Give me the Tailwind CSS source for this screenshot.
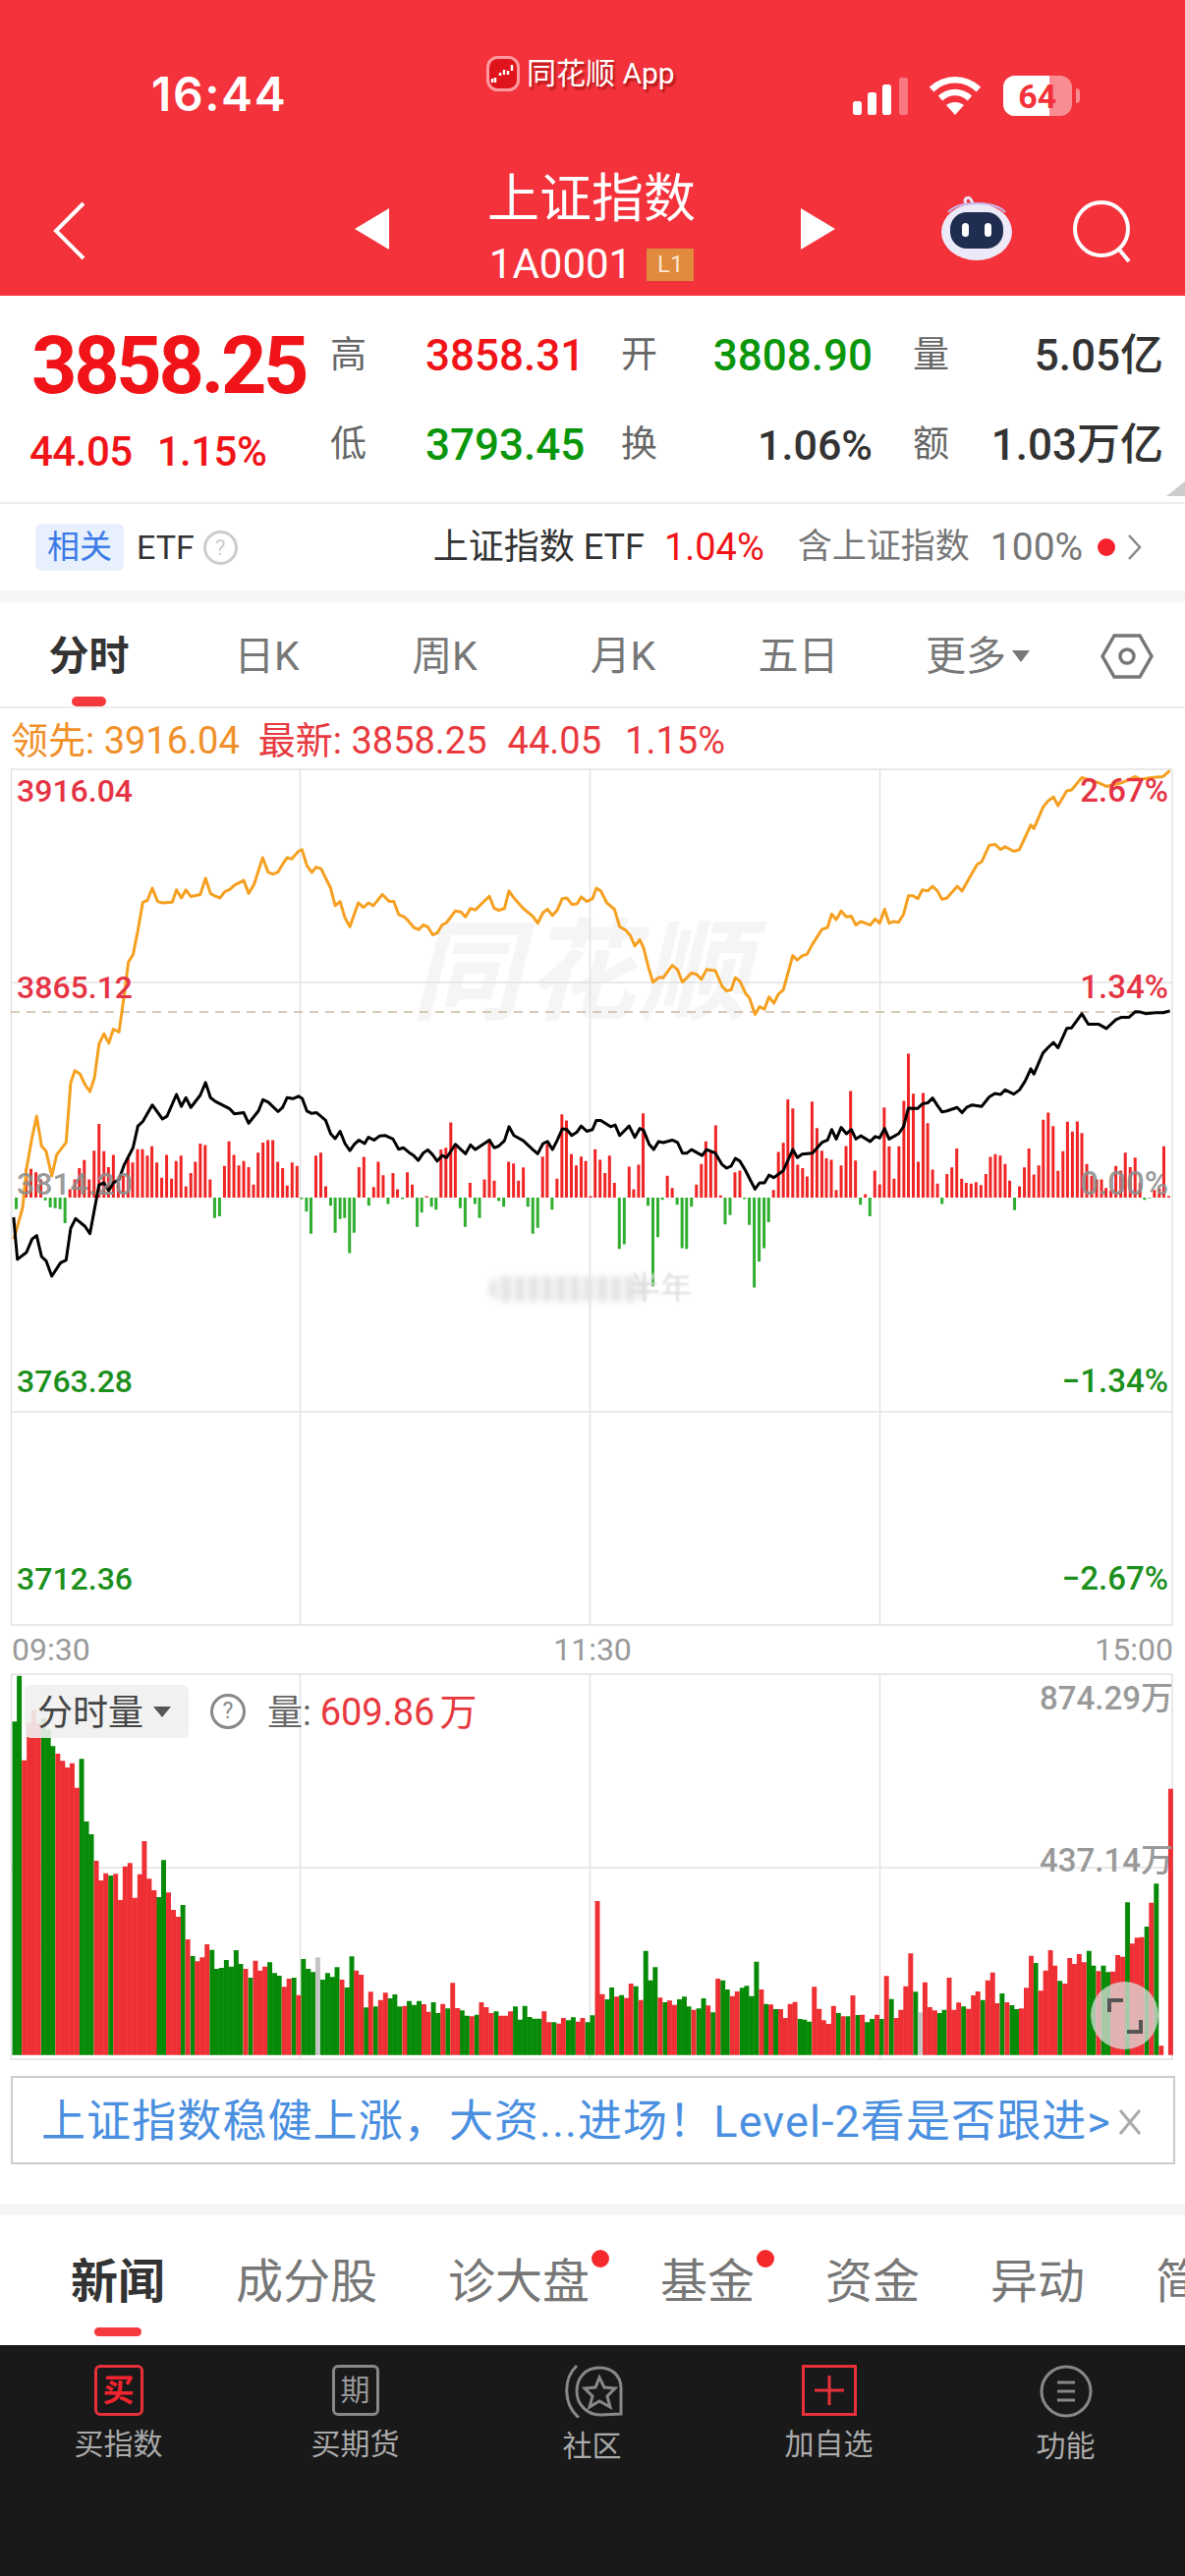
<!DOCTYPE html>
<html lang="zh">
<head>
<meta charset="utf-8">
<script src="https://cdn.jsdelivr.net/npm/@tailwindcss/browser@4"></script>
</head>
<body class="bg-white">
<div class="relative w-[1206px] h-[2622px] overflow-hidden flex flex-col bg-white text-[#333] [font-family:Roboto,'Noto_Sans_CJK_SC',sans-serif]">

<!-- header -->
<header class="h-[301px] shrink-0 bg-[#f3323b] text-white flex flex-col">
  <div class="h-[150px] flex items-start">
    <div class="ml-[154px] mt-[68px] w-[136px] text-[48px] leading-[56px] font-semibold [font-family:Inter,sans-serif] tracking-[1.6px] whitespace-nowrap">16:44</div>
    <div class="ml-[205px] mt-[55px] flex items-center gap-[7px]">
      <svg width="34" height="36" viewBox="0 0 34 36"><rect x="1.5" y="1.5" width="31" height="33" rx="10" fill="#e0141c" stroke="#ff9aa0" stroke-width="3"/><path d="M6 23v4M9 22v5M14 17v3M18 19v-5M22 15v4M26 9v6" stroke="#fff" stroke-width="2.4"/></svg>
      <span class="text-[30px] leading-[40px] [text-shadow:2px_3px_2px_rgba(120,0,0,.55)]">同花顺 App</span>
    </div>
    <svg class="ml-[181px] mt-[78px]" width="60" height="40" viewBox="0 0 60 40"><rect x="0" y="25" width="9" height="14" rx="2.5" fill="#fff"/><rect x="15" y="16" width="9" height="23" rx="2.5" fill="#fff"/><rect x="30" y="8" width="9" height="31" rx="2.5" fill="#fff"/><rect x="47" y="1" width="9" height="38" rx="2.5" fill="#fff" fill-opacity=".35"/></svg>
    <svg class="ml-[17px] mt-[78px]" width="54" height="40" viewBox="0 0 54 40" fill="none"><path d="M3 13C17 0 37 0 51 13" stroke="#fff" stroke-width="6.5"/><path d="M12 22c9-8 21-8 30 0" stroke="#fff" stroke-width="6.5"/><path d="M18 29c5-4 13-4 18 0l-9 10z" fill="#fff"/></svg>
    <div class="relative ml-[22px] mt-[77px] w-[70px] h-[41px] rounded-[12px] bg-white/45 overflow-hidden">
      <div class="w-[47px] h-full bg-white"></div>
      <div class="absolute inset-0 flex items-center justify-center text-[34px] font-bold leading-none text-[#f3323b]">64</div>
    </div>
    <div class="ml-[4px] mt-[90px] w-[4px] h-[15px] rounded-r-full bg-white/45"></div>
  </div>
  <div class="h-[151px] flex items-start">
    <svg class="ml-[53px] mt-[54px]" width="36" height="62" viewBox="0 0 36 62" fill="none"><path d="M32 3 4 31l28 28" stroke="#fff" stroke-width="4"/></svg>
    <svg class="ml-[271px] mt-[62px]" width="36" height="42" viewBox="0 0 36 42"><path d="M36 0v42L1 21z" fill="#fff"/></svg>
    <div class="ml-[56px] w-[300px] flex flex-col items-center">
      <div class="mt-[23px] text-[53px] leading-[60px]">上证指数</div>
      <div class="mt-[14px] flex items-center gap-[15px]">
        <span class="text-[42px] leading-[44px]">1A0001</span>
        <span class="w-[48px] h-[33px] bg-[#e08a3e] text-[#fde7cf] text-[24px] leading-[33px] text-center">L1</span>
      </div>
    </div>
    <svg class="ml-[63px] mt-[62px]" width="36" height="42" viewBox="0 0 36 42"><path d="M0 0v42l35-21z" fill="#fff"/></svg>
    <svg class="ml-[105px] mt-[48px]" width="76" height="68" viewBox="0 0 76 68"><path d="M27 9c-3-5 3-8 5-4l3 6" fill="none" stroke="#e6e4f6" stroke-width="3"/><ellipse cx="38" cy="38" rx="36" ry="29" fill="#eceaf8"/><path d="M9 18C20 6 56 6 67 18" fill="none" stroke="#c8b8f0" stroke-width="2"/><rect x="11" y="18" width="54" height="37" rx="17" fill="#1f2d50"/><rect x="23" y="29" width="7" height="14" rx="3.5" fill="#fff"/><rect x="46" y="29" width="7" height="14" rx="3.5" fill="#fff"/></svg>
    <svg class="ml-[58px] mt-[52px]" width="66" height="66" viewBox="0 0 66 66" fill="none"><circle cx="31" cy="31" r="27" stroke="#fff" stroke-width="4"/><path d="m49 52 10 12" stroke="#fff" stroke-width="4"/></svg>
  </div>
</header>

<!-- quote -->
<section class="relative h-[210px] shrink-0 flex">
  <div class="w-[336px] shrink-0 pl-[32px]">
    <div class="mt-[28px] text-[81px] leading-[88px] font-bold text-[#f01418] tracking-[-3.3px]">3858.25</div>
    <div class="mt-[21px] flex gap-[25px] text-[42px] leading-[44px] font-medium text-[#f01418] tracking-[-.5px]"><span class="-ml-[2px]">44.05</span><span>1.15%</span></div>
  </div>
  <div class="grid grid-cols-[97px_199px_297px_255px] grid-rows-[91px_91px] items-center pt-[15px] w-[848px] text-[44px] font-medium leading-[50px]">
    <div class="text-[37px] font-normal text-[#666]">高</div>
    <div class="text-[#f01418]">3858.31</div>
    <div class="text-[37px] font-normal text-[#666] flex justify-between"><span>开</span><span class="text-[44px] font-medium text-[#0a960a] pr-[41px]">3808.90</span></div>
    <div class="text-[37px] font-normal text-[#666] flex justify-between"><span>量</span><span class="text-[44px] font-medium text-[#333]">5.05亿</span></div>
    <div class="text-[37px] font-normal text-[#666]">低</div>
    <div class="text-[#0a960a]">3793.45</div>
    <div class="text-[37px] font-normal text-[#666] flex justify-between"><span>换</span><span class="text-[43px] font-medium text-[#333] pr-[41px]">1.06%</span></div>
    <div class="text-[37px] font-normal text-[#666] flex justify-between"><span>额</span><span class="text-[44px] font-medium text-[#333]">1.03万亿</span></div>
  </div>
  <div class="absolute right-0 bottom-[6px] w-0 h-0 border-l-[19px] border-l-transparent border-b-[15px] border-b-[#ccc]"></div>
</section>

<!-- etf row -->
<section class="h-[90px] shrink-0 border-t-2 border-[#eee] flex items-center text-[35px] leading-[48px] whitespace-nowrap">
  <div class="ml-[36px] w-[90px] h-[48px] rounded-[6px] bg-[#e8f0fd] text-[#3b7ae6] text-[33px] text-center">相关</div>
  <span class="ml-[13px] text-[34px]">ETF</span>
  <span class="ml-[9px] w-[35px] h-[35px] rounded-full border-[3px] border-[#ccc] text-[#ccc] text-[22px] leading-[29px] text-center">?</span>
  <span class="ml-[199px] text-[#333] text-[36px]">上证指数 ETF</span>
  <span class="ml-[20px] text-[#f01418] text-[38px]">1.04%</span>
  <span class="ml-[34px] text-[#777]">含上证指数</span>
  <span class="ml-[21px] text-[#777] text-[39px]">100%</span>
  <span class="ml-[15px] w-[18px] h-[18px] rounded-full bg-[#f5222d]"></span>
  <svg class="ml-[12px]" width="16" height="28" viewBox="0 0 16 28" fill="none"><path d="m2 2 11 12L2 26" stroke="#888" stroke-width="2.5"/></svg>
</section>
<div class="h-[12px] shrink-0 bg-[#f5f5f5]"></div>

<!-- period tabs -->
<nav class="relative h-[109px] shrink-0 border-b-2 border-[#eee] flex items-center pt-[4px] text-[41px] leading-[48px] text-[#777] -mt-[1px]">
  <div class="w-[181px] text-center text-[#333] font-bold">分时</div>
  <div class="w-[181px] text-center">日K</div>
  <div class="w-[181px] text-center">周K</div>
  <div class="w-[182px] text-center">月K</div>
  <div class="w-[175px] text-center">五日</div>
  <div class="w-[190px] flex items-center justify-center gap-[6px]"><span>更多</span><span class="w-0 h-0 border-x-[9px] border-x-transparent border-t-[12px] border-t-[#777]"></span></div>
  <svg class="ml-[30px]" width="54" height="48" viewBox="0 0 54 48" fill="none"><path d="M14 3h26l12 21-12 21H14L2 24z" stroke="#777" stroke-width="3.5"/><circle cx="27" cy="24" r="7" stroke="#777" stroke-width="3.5"/></svg>
  <div class="absolute left-[73px] bottom-0 w-[35px] h-[10px] rounded-[5px] bg-[#f5393c]"></div>
</nav>

<div class="h-[62px] shrink-0 pl-[11px] pt-[3px] flex items-center text-[38px] leading-[44px] whitespace-nowrap">
  <span class="text-[#f0902a]">领先: 3916.04</span>
  <span class="ml-[19px] text-[#e8393e]">最新: 3858.25</span>
  <span class="ml-[21px] text-[#e8393e]">44.05</span>
  <span class="ml-[24px] text-[#e8393e]">1.15%</span>
</div>

<!-- main chart -->
<section class="relative h-[871px] shrink-0">
  <div class="absolute left-[418px] top-[148px] text-[112px] leading-[120px] font-bold italic text-[#f5f5f5] tracking-[4px]">同花顺</div>
  <svg class="absolute left-0 -top-[4px]" width="1206" height="880" viewBox="0 780 1206 880" fill="none">
    <g stroke="#e2e2e2" stroke-width="1.5">
      <path d="M11.5 784V1655M305.5 784V1655M600.5 784V1655M895.5 784V1655M1193 784V1655M11 784H1193M11 1001H1193M11 1438H1193M11 1655H1193"/>
    </g>
    <path d="M11 1031H1193" stroke="#c9b8a0" stroke-width="1.5" stroke-dasharray="9 7"/>
    <g transform="translate(0,780) scale(.384566 .357143)" fill="none">
      <path vector-effect="non-scaling-stroke" stroke="#2fae2f" stroke-width="3" d="M43 1232V1265M120 1232V1240M133 1232V1260M146 1232V1262M159 1232V1265M172 1232V1305M568 1232V1290M581 1232V1285M798 1232V1236M811 1232V1272M823 1232V1335M875 1232V1255M887 1232V1332M900 1232V1293M912 1232V1290M925 1232V1390M937 1232V1332M976 1232V1255M1027 1232V1250M1065 1232V1236M1104 1232V1315M1116 1232V1275M1142 1232V1258M1154 1232V1266M1218 1232V1262M1231 1232V1315M1257 1232V1250M1269 1232V1290M1320 1232V1242M1333 1232V1258M1397 1232V1258M1410 1232V1335M1423 1232V1318M1461 1232V1266"/>
      <path vector-effect="non-scaling-stroke" stroke="#f02525" stroke-width="3" d="M69 1232V1150M82 1232V1150M95 1232V1160M108 1232V1180M185 1232V1208M198 1232V1180M210 1232V1148M223 1232V1125M236 1232V1180M249 1232V1098M262 1232V1022M275 1232V1100M287 1232V1145M300 1232V1110M313 1232V1190M326 1232V1170M339 1232V1120M351 1232V1132M364 1232V1094M377 1232V1094M390 1232V1112M402 1232V1086M415 1232V1132M428 1232V1175M441 1232V1110M454 1232V1178M466 1232V1128M479 1232V1112M492 1232V1200M505 1232V1162M517 1232V1130M530 1232V1078M543 1232V1082M556 1232V1180M594 1232V1142M606 1232V1072M619 1232V1110M632 1232V1140M645 1232V1128M658 1232V1145M671 1232V1195M683 1232V1104M696 1232V1075M709 1232V1068M722 1232V1068M735 1232V1130M748 1232V1148M760 1232V1198M773 1232V1132M786 1232V1142M836 1232V1112M849 1232V1104M862 1232V1200M950 1232V1145M963 1232V1116M989 1232V1202M1001 1232V1130M1014 1232V1168M1040 1232V1162M1052 1232V1208M1078 1232V1160M1091 1232V1195M1129 1232V1228M1167 1232V1095M1180 1232V1090M1193 1232V1018M1205 1232V1085M1244 1232V1190M1282 1232V1180M1295 1232V1072M1308 1232V1184M1346 1232V1130M1359 1232V1135M1372 1232V1184M1385 1232V1146M1436 1232V1115M1448 1232V1080M1474 1232V1178M1487 1232V995M1499 1232V1012M1512 1232V1108M1525 1232V1140M1538 1232V1115M1550 1232V1128M1563 1232V1228"/>
      <g transform="translate(1568,0)">
        <path vector-effect="non-scaling-stroke" stroke="#2fae2f" stroke-width="3" d="M71 1232V1378M84 1232V1365M147 1232V1255M160 1232V1485M173 1232V1345M185 1232V1238M224 1232V1252M237 1232V1376M249 1232V1378M262 1232V1258M351 1232V1308M364 1232V1282M402 1232V1236M415 1232V1310M428 1232V1488M441 1232V1415M454 1232V1376M466 1232V1302M709 1232V1252M734 1232V1285M925 1232V1250M1117 1232V1268M1461 1232V1238M1474 1232V1234"/>
        <path vector-effect="non-scaling-stroke" stroke="#f02525" stroke-width="3" d="M7 1232V1094M20 1232V1124M33 1232V1162M45 1232V1112M58 1232V1190M97 1232V1144M109 1232V1208M122 1232V1138M134 1232V992M198 1232V1170M211 1232V1205M275 1232V1195M288 1232V1136M300 1232V1072M313 1232V1100M326 1232V1026M339 1232V1226M377 1232V1160M390 1232V1155M479 1232V1210M492 1232V1102M505 1232V1076M517 1232V952M530 1232V978M543 1232V1138M556 1232V1148M568 1232V1172M581 1232V958M594 1232V1034M607 1232V1098M619 1232V1120M632 1232V1124M645 1232V1210M658 1232V1140M671 1232V1085M683 1232V928M696 1232V1126M722 1232V1222M747 1232V1155M760 1232V1194M772 1232V975M785 1232V1086M798 1232V1178M811 1232V1086M824 1232V956M836 1232V822M849 1232V936M862 1232V1130M875 1232V934M887 1232V1020M900 1232V1152M913 1232V1192M938 1232V1165M951 1232V1146M964 1232V1092M977 1232V1178M989 1232V1190M1002 1232V1192M1015 1232V1188M1028 1232V1196M1041 1232V1165M1053 1232V1116M1066 1232V1108M1079 1232V1112M1092 1232V1136M1104 1232V1184M1130 1232V1200M1143 1232V1146M1155 1232V1092M1168 1232V1166M1181 1232V1140M1193 1232V1010M1206 1232V990M1219 1232V1028M1232 1232V1156M1245 1232V1100M1257 1232V1016M1270 1232V1044M1283 1232V1015M1295 1232V1048M1308 1232V1136M1321 1232V1170M1334 1232V1180M1347 1232V1180M1359 1232V1205M1372 1232V1212M1385 1232V1142M1398 1232V1155M1410 1232V1104M1423 1232V1145M1436 1232V1118M1449 1232V1190M1487 1232V1210M1500 1232V1206M1512 1232V1086M1525 1232V1228"/>
      </g>
      <path vector-effect="non-scaling-stroke" stroke="#f5a020" stroke-width="3" stroke-linejoin="round" d="M36 1350 42 1330 60 1260 70 1150 85 1060 97 1000 110 1085 122 1100 137 1170 150 1110 175 1075 187 905 198 870 212 880 225 910 238 930 250 890 262 795 275 765 288 792 300 752 315 760 328 660 340 560 352 540 365 470 378 390 390 385 403 350 417 388 430 392 456 390 467 355 480 378 492 355 505 374 530 368 544 322 557 365 570 373 582 378 595 360 608 354 620 342 645 328 658 365 672 340 695 263 710 305 722 310 735 305 748 282 760 263 772 267 790 245 799 240 812 285 825 305 837 290 850 295 875 350 887 400 900 388 913 435 926 460 948 392 962 405 975 392 988 400 1012 368 1030 388 1042 388 1055 425 1070 432 1082 445 1095 462 1108 468 1120 455 1132 460 1145 483 1157 478 1170 455 1182 448 1205 415 1220 418 1232 432 1245 408 1258 412 1295 373 1308 408 1320 413 1335 408 1347 358 1360 378 1385 408 1410 430 1423 450 1437 420 1449 410 1462 428 1475 412 1488 380 1500 378 1513 396 1527 395 1538 375 1553 388 1568 380 1578 350 1590 358 1606 392 1626 410 1640 460 1656 470 1668 485 1680 515 1693 497 1703 520 1716 575 1728 618 1743 605 1755 605 1779 570 1793 582 1806 618 1830 592 1843 595 1856 610 1870 582 1893 585 1911 630 1923 643 1935 640 1946 605 1958 615 1973 650 1983 662 1998 710 2010 688 2023 695 2035 660 2048 678 2060 652 2073 640 2098 542 2110 555 2123 543 2136 538 2150 510 2175 468 2190 462 2201 424 2213 440 2226 415 2240 432 2253 430 2265 455 2278 445 2303 455 2316 438 2328 450 2341 410 2353 450 2365 445 2378 447 2391 425 2404 372 2416 372 2429 380 2441 355 2455 358 2468 345 2481 358 2493 382 2506 378 2533 345 2546 358 2586 282 2598 275 2618 228 2633 225 2648 240 2660 232 2683 245 2698 240 2728 170 2736 180 2760 120 2773 102 2788 90 2800 115 2823 73 2836 70 2863 35 2908 50 2928 60 2968 50 3005 32 3018 40 3048 35 3078 32 3096 15"/>
      <path vector-effect="non-scaling-stroke" stroke="#000" stroke-width="3" stroke-linejoin="round" d="M36 1288 46 1408 70 1388 85 1350 97 1340 110 1400 122 1412 137 1456 160 1418 175 1410 187 1320 200 1292 225 1314 238 1335 262 1196 275 1190 288 1212 300 1190 315 1180 328 1140 352 1090 365 1028 378 1015 403 968 430 1008 442 1000 467 938 480 972 492 947 505 975 530 940 544 904 557 947 570 958 607 978 620 993 645 990 658 1020 684 985 696 953 710 960 736 987 748 975 760 947 775 950 790 943 800 950 812 985 825 992 838 990 862 1012 875 1050 887 1064 900 1043 913 1078 926 1098 938 1080 950 1068 965 1078 975 1060 990 1068 1005 1056 1020 1055 1040 1065 1055 1094 1068 1090 1082 1103 1095 1112 1107 1126 1120 1105 1132 1096 1145 1110 1157 1128 1170 1112 1182 1118 1205 1080 1220 1095 1232 1107 1245 1082 1258 1095 1295 1068 1308 1090 1320 1085 1335 1070 1347 1030 1360 1055 1385 1070 1410 1095 1423 1107 1437 1078 1449 1072 1462 1095 1475 1068 1488 1036 1500 1038 1513 1055 1527 1045 1538 1028 1553 1043 1568 1038 1578 1012 1590 1012 1616 1030 1628 1025 1640 1055 1665 1028 1680 1060 1693 1035 1703 1040 1718 1080 1730 1095 1743 1072 1755 1075 1779 1068 1793 1075 1806 1105 1818 1105 1830 1095 1858 1112 1870 1095 1893 1105 1911 1138 1923 1148 1935 1142 1946 1120 1958 1128 1973 1155 1998 1208 2010 1190 2023 1190 2035 1168 2048 1175 2073 1155 2098 1095 2110 1118 2123 1108 2150 1105 2175 1075 2190 1068 2201 1038 2213 1065 2226 1032 2240 1050 2253 1038 2265 1065 2278 1056 2303 1072 2316 1058 2328 1062 2341 1035 2353 1065 2378 1050 2391 1030 2404 977 2428 978 2441 965 2455 962 2468 948 2481 970 2493 988 2506 985 2533 975 2546 990 2558 975 2573 968 2598 972 2618 945 2633 935 2648 938 2660 925 2683 937 2698 925 2713 900 2728 865 2736 880 2760 820 2773 805 2788 790 2800 805 2823 750 2836 748 2863 708 2880 738 2908 738 2928 750 2953 725 2968 718 2988 718 3005 702 3018 703 3033 708 3058 705 3078 705 3096 700"/>
    </g>
  </svg>
  <div class="absolute left-[498px] top-[516px] w-[160px] h-[26px] rounded-[13px] bg-[repeating-linear-gradient(90deg,#dcdcdc_0_6px,#f6f6f6_6px_14px)] blur-[3px]"></div>
  <div class="absolute left-[640px] top-[506px] text-[32px] leading-[44px] text-[#ddd] blur-[1px]">半年</div>
  <div class="absolute inset-0 text-[32px] leading-[44px] font-medium">
    <span class="absolute left-[17px] top-[0px] text-[#e53444]">3916.04</span>
    <span class="absolute left-[17px] top-[200px] text-[#e53444]">3865.12</span>
    <span class="absolute left-[17px] top-[400px] text-[#8d8d8d]/90">3814.20</span>
    <span class="absolute left-[17px] top-[601px] text-[#1c8f1c]">3763.28</span>
    <span class="absolute left-[17px] top-[802px] text-[#1c8f1c]">3712.36</span>
    <span class="absolute right-[17px] top-[0px] text-[33px] text-[#e53444]">2.67%</span>
    <span class="absolute right-[17px] top-[200px] text-[33px] text-[#e53444]">1.34%</span>
    <span class="absolute right-[17px] top-[400px] text-[33px] text-[#8d8d8d]/90">0.00%</span>
    <span class="absolute right-[17px] top-[601px] text-[33px] text-[#1c8f1c]">−1.34%</span>
    <span class="absolute right-[17px] top-[802px] text-[33px] text-[#1c8f1c]">−2.67%</span>
  </div>
</section>

<div class="h-[50px] shrink-0 px-[12px] flex items-center justify-between text-[32px] leading-[44px] text-[#999]">
  <span>09:30</span><span>11:30</span><span>15:00</span>
</div>

<!-- volume chart -->
<section class="relative h-[393px] shrink-0">
  <svg class="absolute left-0 -top-[65px]" width="1206" height="480" viewBox="0 1640 1206 480" fill="none">
    <path d="M11.5 1705V2098M305.5 1705V2098M600.5 1705V2098M895.5 1705V2098M1193 1705V2098M11 1705H1193M11 1902H1193M11 2097H1193" stroke="#e2e2e2" stroke-width="1.5"/>
    <g transform="translate(0,1640) scale(.384566 .333333)" fill="none" stroke-width="4.95">
      <path vector-effect="non-scaling-stroke" stroke="#078a07" d="M39 1358V340M51 1358V200M115 1358V330M128 1358V365M140 1358V415M216 1358V454M229 1358V645M242 1358V684M293 1358V810M420 1358V876M433 1358V763M484 1358V900M510 1358V1056M561 1358V1037M573 1358V1095M586 1358V1092M599 1358V1068M612 1358V1088M625 1358V1038M637 1358V1080M663 1358V1122M714 1358V1075M727 1358V1108M739 1358V1116M778 1358V1122M803 1358V1065M816 1358V1095M829 1358V1105M854 1358V1128M867 1358V1108M880 1358V1120M892 1358V1090M918 1358V1152M931 1358V1057M969 1358V1213M994 1358V1210M1032 1358V1185M1045 1358V1173M1058 1358V1210M1083 1358V1193M1096 1358V1205M1109 1358V1193M1147 1358V1197M1160 1358V1230M1185 1358V1216M1223 1358V1222M1236 1358V1238M1262 1358V1235M1313 1358V1225M1364 1358V1210M1376 1358V1250M1389 1358V1208M1402 1358V1242M1415 1358V1247M1428 1358V1247M1466 1358V1258M1504 1358V1252M1517 1358V1243M1555 1358V1258M1568 1358V1237"/>
      <path vector-effect="non-scaling-stroke" stroke="#ee3035" d="M64 1358V458M77 1358V345M89 1358V305M102 1358V345M153 1358V438M166 1358V460M178 1358V480M191 1358V467M204 1358V542M255 1358V765M267 1358V825M280 1358V803M306 1358V805M319 1358V885M331 1358V782M344 1358V772M357 1358V878M370 1358V806M382 1358V705M395 1358V820M408 1358V855M446 1358V862M459 1358V915M472 1358V936M497 1358V1005M522 1358V1072M535 1358V1060M548 1358V1020M650 1358V1095M676 1358V1070M688 1358V1100M701 1358V1088M752 1358V1150M765 1358V1125M790 1358V1175M905 1358V1128M943 1358V1100M956 1358V1113M981 1358V1165M1007 1358V1190M1020 1358V1168M1071 1358V1208M1122 1358V1203M1134 1358V1226M1172 1358V1202M1198 1358V1138M1211 1358V1215M1249 1358V1240M1274 1358V1197M1287 1358V1212M1300 1358V1230M1325 1358V1238M1338 1358V1238M1351 1358V1225M1440 1358V1225M1453 1358V1258M1479 1358V1262M1491 1358V1245M1530 1358V1256M1542 1358V1245"/>
      <path vector-effect="non-scaling-stroke" stroke="#c4c4c4" d="M841 1358V1060"/>
      <g transform="translate(1568,0)">
        <path vector-effect="non-scaling-stroke" stroke="#078a07" d="M39 1358V1188M51 1358V1152M77 1358V1175M115 1358V1148M141 1358V1040M153 1358V1130M166 1358V1090M192 1358V1197M230 1358V1188M243 1358V1180M255 1358V1210M281 1358V1216M294 1358V1185M319 1358V1228M345 1358V1130M357 1358V1158M396 1358V1153M408 1358V1147M421 1358V1178M434 1358V1073M459 1358V1202M485 1358V1218M549 1358V1248M561 1358V1250M574 1358V1256M651 1358V1230M676 1358V1240M702 1358V1236M727 1358V1258M740 1358V1248M765 1358V1248M791 1358V1187M855 1358V1165M918 1358V1230M931 1358V1220M982 1358V1210M1033 1358V1190M1084 1358V1170M1110 1358V1206M1122 1358V1218M1173 1358V1077M1237 1358V1132M1314 1358V1040M1326 1358V1085M1352 1358V1085M1365 1358V1105M1416 1358V892M1467 1358V966M1492 1358V835"/>
        <path vector-effect="non-scaling-stroke" stroke="#ee3035" d="M13 1358V888M26 1358V1172M64 1358V1180M90 1358V1184M102 1358V1140M128 1358V1190M179 1358V1183M204 1358V1192M217 1358V1205M268 1358V1220M306 1358V1207M332 1358V1125M370 1358V1178M383 1358V1164M447 1358V1158M472 1358V1204M498 1358V1218M510 1358V1245M523 1358V1202M536 1358V1196M587 1358V1150M600 1358V1217M612 1358V1252M625 1358V1263M638 1358V1208M663 1358V1240M689 1358V1176M714 1358V1235M753 1358V1235M778 1358V1117M804 1358V1245M816 1358V1220M829 1358V1148M842 1358V1048M880 1358V1136M893 1358V1212M906 1358V1222M944 1358V1122M957 1358V1220M969 1358V1198M995 1358V1217M1008 1358V1176M1020 1358V1164M1046 1358V1130M1059 1358V1106M1071 1358V1200M1097 1358V1197M1135 1358V1216M1148 1358V1153M1161 1358V1055M1186 1358V1162M1199 1358V1100M1212 1358V1038M1224 1358V1085M1250 1358V1140M1263 1358V1062M1275 1358V1080M1288 1358V1050M1301 1358V1075M1339 1358V1102M1377 1358V1103M1390 1358V1053M1403 1358V1058M1428 1358V1018M1441 1358V1000M1454 1358V998M1479 1358V893M1505 1358V1330M1530 1358V545"/>
        <path vector-effect="non-scaling-stroke" stroke="#c4c4c4" d="M867 1358V1228"/>
      </g>
    </g>
  </svg>
  <div class="absolute left-[25px] top-[11px] w-[167px] h-[54px] rounded-[6px] bg-[#f0f0f0]/90 flex items-center pl-[13px] gap-[10px] text-[36px] leading-[44px] text-[#444]">
    <span class="pt-[3px]">分时量</span><span class="w-0 h-0 border-x-[9px] border-x-transparent border-t-[11px] border-t-[#555]"></span>
  </div>
  <div class="absolute left-[214px] top-[20px] w-[36px] h-[36px] rounded-full border-[3px] border-[#888] text-[#888] text-[23px] leading-[30px] text-center">?</div>
  <div class="absolute left-[272px] top-[17px] text-[36px] leading-[44px] text-[#666] whitespace-nowrap">量: <span class="text-[#e8393e] text-[38px]">609.86<span class="ml-[5px]">万</span></span></div>
  <div class="absolute right-[12px] top-[3px] text-[33px] leading-[44px] font-medium text-[#999]">874.29万</div>
  <div class="absolute right-[12px] top-[168px] text-[33px] leading-[44px] font-medium text-[#999]">437.14万</div>
  <div class="absolute left-[1110px] top-[313px] w-[69px] h-[69px] rounded-full bg-[#dedede]/75 flex items-center justify-center">
    <svg width="36" height="36" viewBox="0 0 36 36" fill="none"><path d="M2 14V2h14M34 22v12H20" stroke="#555" stroke-width="4"/></svg>
  </div>
</section>

<!-- banner -->
<div class="h-[16px] shrink-0"></div>
<div class="ml-[11px] w-[1185px] h-[90px] shrink-0 border-2 border-[#ccc] flex items-center pl-[29px] pt-[3px] text-[45px] leading-[56px] text-[#4a8fe0] tracking-[1.1px] whitespace-nowrap">
  <span>上证指数稳健上涨&#65292;大资...进场&#65281;Level-2看是否跟进&gt;</span>
  <svg class="absolute left-[1138px]" width="24" height="28" viewBox="0 0 24 28" fill="none"><path d="m2 2 20 24M22 2 2 26" stroke="#aaa" stroke-width="3"/></svg>
</div>
<div class="h-[40px] shrink-0"></div>
<div class="h-[12px] shrink-0 bg-[#f5f5f5]"></div>

<!-- news tabs -->
<nav class="relative h-[132px] shrink-0 overflow-hidden flex items-center gap-[72px] pl-[72px] pt-[4px] text-[48px] leading-[60px] text-[#777] whitespace-nowrap">
  <span class="font-bold text-[#333]">新闻</span>
  <span>成分股</span>
  <span class="relative">诊大盘<i class="absolute -right-[20px] top-[-3px] w-[18px] h-[18px] rounded-full bg-[#f5292c]"></i></span>
  <span class="relative">基金<i class="absolute -right-[20px] top-[-3px] w-[18px] h-[18px] rounded-full bg-[#f5292c]"></i></span>
  <span>资金</span>
  <span>异动</span>
  <span>简</span>
  <div class="absolute left-[96px] bottom-[9px] w-[48px] h-[9px] rounded-[5px] bg-[#f5393c]"></div>
</nav>

<!-- footer -->
<footer class="flex-1 bg-[#191919] text-[#aaa]">
  <div class="grid grid-cols-[241px_241px_241px_241px_241px] pt-[20px] text-[30px] leading-[36px] text-center">
    <div class="flex flex-col items-center gap-[11px]">
      <div class="w-[50px] h-[52px] rounded-[6px] border-[3px] border-[#e8303a] text-[#f0242f] text-[32px] font-bold leading-[46px]">买</div>
      <span>买指数</span>
    </div>
    <div class="flex flex-col items-center gap-[11px]">
      <div class="w-[48px] h-[52px] rounded-[6px] border-[3px] border-[#888] text-[#999] text-[30px] leading-[46px]">期</div>
      <span>买期货</span>
    </div>
    <div class="flex flex-col items-center gap-[11px]">
      <svg width="62" height="54" viewBox="0 0 62 54" fill="none" stroke="#888" stroke-width="3"><path d="M15 1C1 14 1 40 17 54"/><path d="M60 50V24C60 10 50 3 38 3 24 3 15 13 15 27c0 13 10 24 24 24z"/><path d="m38 13 5 10 11 1-8 8 3 11-11-6-10 6 3-11-8-8 11-1z"/></svg>
      <span>社区</span>
    </div>
    <div class="flex flex-col items-center gap-[11px]">
      <div class="w-[56px] h-[52px] border-[3px] border-[#e8303a] flex items-center justify-center"><svg width="30" height="30" viewBox="0 0 30 30"><path d="M15 0v30M0 15h30" stroke="#e8303a" stroke-width="3"/></svg></div>
      <span>加自选</span>
    </div>
    <div class="flex flex-col items-center gap-[11px]">
      <svg width="54" height="54" viewBox="0 0 54 54" fill="none" stroke="#888" stroke-width="3"><circle cx="27" cy="27" r="25"/><path d="M18 18h18M18 27h18M18 36h18"/></svg>
      <span>功能</span>
    </div>
  </div>
</footer>
</div>
</body>
</html>
